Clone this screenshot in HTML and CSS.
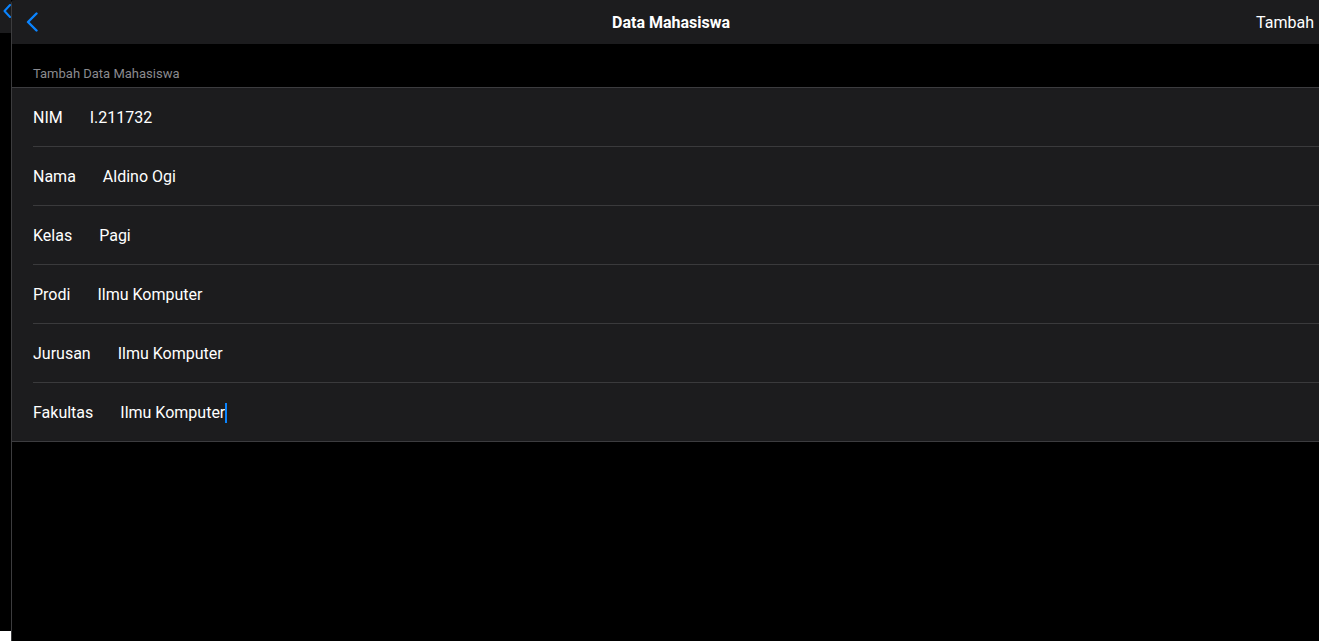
FILE: index.html
```html
<!DOCTYPE html>
<html lang="id">
<head>
<meta charset="utf-8">
<title>Data Mahasiswa</title>
<link rel="stylesheet" href="styles.css">
</head>
<body>
<div class="screen">
  <aside class="behind">
    <div class="behind-bar">
      <svg class="behind-chev" width="8" height="14" viewBox="0 0 8 14"><path d="M7 1 L1.5 7 L7 13" fill="none" stroke="#0a84ff" stroke-width="2" stroke-linecap="round" stroke-linejoin="round"/></svg>
    </div>
    <div class="behind-chip"></div>
  </aside>
  <main class="page">
    <header class="navbar">
      <div class="nav-left">
        <svg width="12" height="20" viewBox="0 0 12 20"><path d="M10.5 1.5 L2 10 L10.5 18.5" fill="none" stroke="#0a84ff" stroke-width="2.4" stroke-linecap="round" stroke-linejoin="round"/></svg>
      </div>
      <h1 class="nav-title">Data Mahasiswa</h1>
      <div class="nav-right">Tambah</div>
    </header>
    <section class="group">
      <div class="group-header">Tambah Data Mahasiswa</div>
      <ul class="list">
        <li class="row"><span class="label">NIM</span><span class="value">I.211732</span></li>
        <li class="row"><span class="label">Nama</span><span class="value">Aldino Ogi</span></li>
        <li class="row"><span class="label">Kelas</span><span class="value">Pagi</span></li>
        <li class="row"><span class="label">Prodi</span><span class="value">Ilmu Komputer</span></li>
        <li class="row"><span class="label">Jurusan</span><span class="value">Ilmu Komputer</span></li>
        <li class="row"><span class="label">Fakultas</span><span class="value">Ilmu Komputer<span class="caret"></span></span></li>
      </ul>
    </section>
  </main>
</div>
</body>
</html>
```

FILE: styles.css
```css
* { box-sizing: border-box; }
html, body {
  margin: 0;
  padding: 0;
  background: #000;
  height: 100%;
}
body {
  font-family: Roboto, "Liberation Sans", sans-serif;
  color: #fff;
  overflow: hidden;
}
.screen {
  display: flex;
  width: 1319px;
  height: 641px;
}
.behind {
  width: 11px;
  flex: none;
  display: flex;
  flex-direction: column;
  overflow: hidden;
}
.behind-bar {
  height: 33px;
  background: #1c1c1e;
  padding: 4px 0 0 3px;
}
.behind-chev { display: block; }
.behind-chip {
  margin-top: auto;
  height: 10px;
  background: #fff;
}
.page {
  flex: 1;
  border-left: 1px solid #3c3c3e;
  border-top-left-radius: 4px;
  overflow: hidden;
  display: flex;
  flex-direction: column;
}
.navbar {
  height: 44px;
  background: #1c1c1e;
  display: grid;
  grid-template-columns: 1fr auto 1fr;
  align-items: center;
  padding: 0 5px 0 14px;
}
.nav-left svg { display: block; }
.nav-title {
  margin: 0 0 0 2px;
  font-size: 16px;
  font-weight: 700;
}
.nav-right {
  justify-self: end;
  font-size: 16px;
}
.group-header {
  padding: 22px 0 6px 21px;
  font-size: 13px;
  line-height: 15px;
  color: #8a8a8f;
}
.list {
  list-style: none;
  margin: 0;
  padding: 0 0 0 21px;
  background: #1c1c1e;
  border-top: 1px solid #3c3c3f;
  border-bottom: 1px solid #3c3c3f;
}
.row {
  height: 59px;
  display: flex;
  align-items: center;
  gap: 27px;
  font-size: 16px;
  border-bottom: 1px solid #3a3a3c;
  padding-top: 1px;
}
.row:last-child {
  border-bottom: none;
  height: 58px;
}
.value { display: inline-flex; align-items: center; }
.caret {
  display: inline-block;
  width: 2px;
  height: 20px;
  background: #0a84ff;
}
```
